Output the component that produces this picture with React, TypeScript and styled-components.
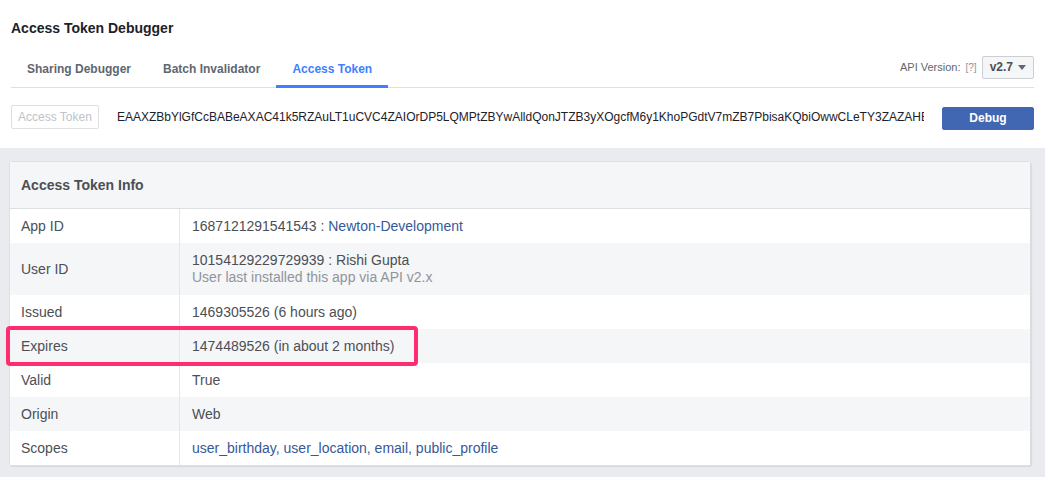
import React from 'react';
import styled, { createGlobalStyle } from 'styled-components';

const GlobalStyles = createGlobalStyle`
  html, body {
    margin: 0;
    padding: 0;
    background: #e9ebee;
  }
  body {
    font-family: 'Liberation Sans', Arial, Helvetica, sans-serif;
    color: #1d2129;
  }
  * {
    box-sizing: border-box;
  }
`;

export const Page = styled.div`
  width: 1045px;
  height: 477px;
  overflow: hidden;
  display: flex;
  flex-direction: column;
`;

export const Header = styled.div`
  background: #ffffff;
  padding: 0 11px;
`;

export const Title = styled.h1`
  margin: 0;
  height: 55px;
  display: flex;
  align-items: center;
  font-size: 14px;
  font-weight: bold;
  color: #1d2129;
`;

export const TabBar = styled.div`
  display: flex;
  align-items: stretch;
  height: 33px;
  border-bottom: 1px solid #dddfe2;
`;

export const Tab = styled.div<{ active?: boolean }>`
  padding: 0 16px 2px;
  display: flex;
  align-items: center;
  font-size: 12px;
  font-weight: bold;
  color: ${p => (p.active ? '#4080ff' : '#606770')};
  border-bottom: 3px solid ${p => (p.active ? '#4080ff' : 'transparent')};
  margin-bottom: -1px;
  cursor: pointer;
`;

export const Spacer = styled.div`
  flex: 1;
`;

export const VersionBox = styled.div`
  display: flex;
  align-items: center;
  gap: 5px;
  padding-bottom: 8px;
`;

export const VersionLabel = styled.span`
  font-size: 11px;
  color: #606770;
`;

export const Help = styled.span`
  color: #90949c;
  font-size: 10px;
`;

export const Select = styled.div`
  height: 23px;
  padding: 0 7px;
  border: 1px solid #ccd0d5;
  border-radius: 2px;
  background: #f5f6f7;
  display: flex;
  align-items: center;
  gap: 5px;
  font-size: 12px;
  font-weight: bold;
  color: #4b4f56;
`;

export const Caret = styled.span`
  width: 0;
  height: 0;
  border-left: 4px solid transparent;
  border-right: 4px solid transparent;
  border-top: 5px solid #606770;
`;

export const TokenRow = styled.div`
  height: 60px;
  display: flex;
  align-items: center;
  gap: 18px;
`;

export const TokenLabel = styled.div`
  width: 88px;
  height: 24px;
  border: 1px solid #dddfe2;
  border-radius: 2px;
  display: flex;
  align-items: center;
  justify-content: center;
  font-size: 12px;
  color: #bec3c9;
  margin-top: -2px;
`;

export const TokenInput = styled.input`
  width: 808px;
  padding: 0;
  border: none;
  outline: none;
  background: transparent;
  font-family: inherit;
  font-size: 12px;
  color: #1d2129;
  margin-top: -2px;
`;

export const DebugButton = styled.button`
  margin-left: auto;
  width: 92px;
  height: 23px;
  border: 1px solid #4267b2;
  border-radius: 2px;
  background: #4267b2;
  color: #ffffff;
  font-family: inherit;
  font-size: 12px;
  font-weight: bold;
`;

export const Body = styled.div`
  flex: 1;
  padding: 13px 14px 0 9px;
`;

export const Card = styled.div`
  background: #ffffff;
  border: 1px solid #dddfe2;
  border-radius: 3px;
  box-shadow: 1px 1px 1px rgba(0, 0, 0, 0.08);
`;

export const CardHeader = styled.div`
  height: 47px;
  padding: 0 11px;
  display: flex;
  align-items: center;
  background: #f5f6f7;
  border-bottom: 1px solid #dddfe2;
  font-size: 14px;
  font-weight: bold;
  color: #4b4f56;
`;

export const Row = styled.div<{ shaded?: boolean; tall?: boolean }>`
  position: relative;
  display: grid;
  grid-template-columns: 170px 1fr;
  min-height: ${p => (p.tall ? '52px' : '34px')};
  background: ${p => (p.shaded ? '#f5f6f7' : '#ffffff')};
  font-size: 14px;
`;

export const Label = styled.div`
  padding: 0 11px;
  display: flex;
  align-items: center;
  color: #4b4f56;
  border-right: 1px solid #e5e6e9;
`;

export const Value = styled.div`
  padding: 0 12px;
  display: flex;
  flex-direction: column;
  justify-content: center;
  color: #4b4f56;
  line-height: 17px;
`;

export const Link = styled.a`
  color: #365899;
  text-decoration: none;
`;

export const Muted = styled.span`
  color: #90949c;
`;

export const Highlight = styled.div`
  position: absolute;
  z-index: 2;
  left: -4px;
  top: -3px;
  width: 412px;
  height: 40px;
  border: 4px solid #ff2d6f;
  border-radius: 4px;
  pointer-events: none;
`;

const token =
  'EAAXZBbYlGfCcBABeAXAC41k5RZAuLT1uCVC4ZAIOrDP5LQMPtZBYwAlldQonJTZB3yXOgcfM6y1KhoPGdtV7mZB7PbisaKQbiOwwCLeTY3ZAZAHBZCq9wZDZD';

const rows: { label: string; value: React.ReactNode; tall?: boolean; highlight?: boolean }[] = [
  {
    label: 'App ID',
    value: (
      <span>
        1687121291541543 : <Link href="#">Newton-Development</Link>
      </span>
    ),
  },
  {
    label: 'User ID',
    tall: true,
    value: (
      <>
        <span>10154129229729939 : Rishi Gupta</span>
        <Muted>User last installed this app via API v2.x</Muted>
      </>
    ),
  },
  { label: 'Issued', value: '1469305526 (6 hours ago)' },
  { label: 'Expires', value: '1474489526 (in about 2 months)', highlight: true },
  { label: 'Valid', value: 'True' },
  { label: 'Origin', value: 'Web' },
  {
    label: 'Scopes',
    value: <Link href="#">user_birthday, user_location, email, public_profile</Link>,
  },
];

const App = () => {
  return (
    <React.Fragment>
      <GlobalStyles />
      <Page>
        <Header>
          <Title>Access Token Debugger</Title>
          <TabBar>
            <Tab>Sharing Debugger</Tab>
            <Tab>Batch Invalidator</Tab>
            <Tab active>Access Token</Tab>
            <Spacer />
            <VersionBox>
              <VersionLabel>API Version:</VersionLabel>
              <Help>[?]</Help>
              <Select>
                v2.7 <Caret />
              </Select>
            </VersionBox>
          </TabBar>
          <TokenRow>
            <TokenLabel>Access Token</TokenLabel>
            <TokenInput readOnly value={token} />
            <DebugButton>Debug</DebugButton>
          </TokenRow>
        </Header>
        <Body>
          <Card>
            <CardHeader>Access Token Info</CardHeader>
            {rows.map((r, i) => (
              <Row key={r.label} shaded={i % 2 === 1} tall={r.tall}>
                <Label>{r.label}</Label>
                <Value>{r.value}</Value>
                {r.highlight && <Highlight />}
              </Row>
            ))}
          </Card>
        </Body>
      </Page>
    </React.Fragment>
  );
};

export default App;
